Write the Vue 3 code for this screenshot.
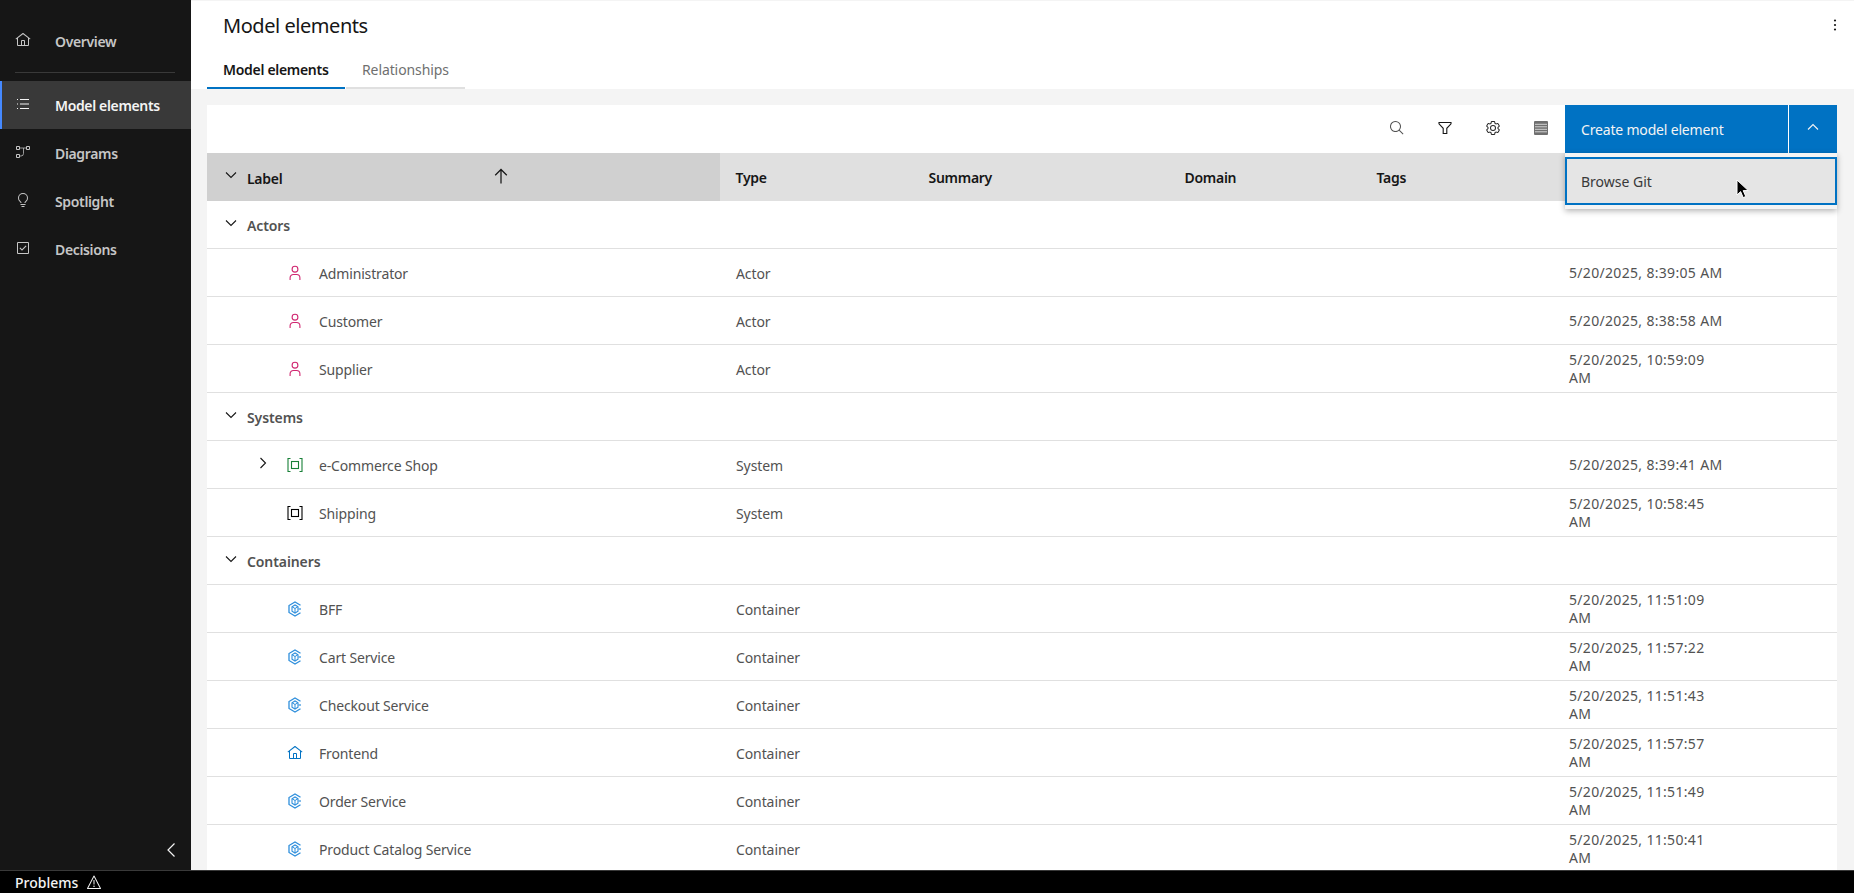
<script setup>
const nav = [
  { label: 'Model elements', icon: 'list', active: true },
  { label: 'Diagrams', icon: 'diagram' },
  { label: 'Spotlight', icon: 'idea' },
  { label: 'Decisions', icon: 'check' }
]
const columns = ['Type', 'Summary', 'Domain', 'Tags', '']
const groups = [
  {
    label: 'Actors',
    rows: [
      { label: 'Administrator', type: 'Actor', date: '5/20/2025, 8:39:05 AM', icon: 'user' },
      { label: 'Customer', type: 'Actor', date: '5/20/2025, 8:38:58 AM', icon: 'user' },
      { label: 'Supplier', type: 'Actor', date: '5/20/2025, 10:59:09\nAM', icon: 'user' }
    ]
  },
  {
    label: 'Systems',
    rows: [
      { label: 'e-Commerce Shop', type: 'System', date: '5/20/2025, 8:39:41 AM', icon: 'system', tone: 'green', expand: true },
      { label: 'Shipping', type: 'System', date: '5/20/2025, 10:58:45\nAM', icon: 'system', tone: 'black' }
    ]
  },
  {
    label: 'Containers',
    rows: [
      { label: 'BFF', type: 'Container', date: '5/20/2025, 11:51:09\nAM', icon: 'container' },
      { label: 'Cart Service', type: 'Container', date: '5/20/2025, 11:57:22\nAM', icon: 'container' },
      { label: 'Checkout Service', type: 'Container', date: '5/20/2025, 11:51:43\nAM', icon: 'container' },
      { label: 'Frontend', type: 'Container', date: '5/20/2025, 11:57:57\nAM', icon: 'home' },
      { label: 'Order Service', type: 'Container', date: '5/20/2025, 11:51:49\nAM', icon: 'container' },
      { label: 'Product Catalog Service', type: 'Container', date: '5/20/2025, 11:50:41\nAM', icon: 'container' }
    ]
  }
]
const homePath = 'M16.6123,2.2138a1.01,1.01,0,0,0-1.2427,0L1,13.4194l1.2427,1.5717L4,13.6209V26a2.0041,2.0041,0,0,0,2,2H26a2.0037,2.0037,0,0,0,2-2V13.63L29.7573,15,31,13.4282ZM18,26H14V18h4Zm2,0V18a2.0023,2.0023,0,0,0-2-2H14a2.002,2.002,0,0,0-2,2v8H6V12.0615l10-7.79,10,7.8005V26Z'
</script>

<template>
  <div class="app">
    <div class="body">
      <aside class="sidebar">
        <a class="nav-item">
          <svg class="nav-icon" viewBox="0 0 32 32" fill="currentColor"><path :d="homePath" /></svg>
          <span>Overview</span>
        </a>
        <div class="nav-divider"></div>
        <a v-for="item in nav" :key="item.label" class="nav-item" :class="{ active: item.active }">
          <svg class="nav-icon" viewBox="0 0 32 32" fill="currentColor">
            <path v-if="item.icon === 'list'" d="M10 6H28V8H10zM10 24H28V26H10zM10 15H28V17H10zM4 15H6V17H4zM4 6H6V8H4zM4 24H6V26H4z" />
            <g v-else-if="item.icon === 'diagram'" fill="none" stroke="currentColor">
              <path stroke-width="2" d="M3 5h6v6H3ZM23 5h6v6h-6ZM3 21h6v6H3Z" />
              <path stroke-width="2" opacity=".75" d="M10 8h12M17 8v11q0 5-5 5h-2" />
            </g>
            <path v-else-if="item.icon === 'idea'" d="M11 24H21V26H11zM13 28H19V30H13zM16 2A10 10 0 0 0 6 12a9.19 9.19 0 0 0 3.46 7.62c1 .93 1.54 1.46 1.54 2.38h2c0-1.84-1.11-2.87-2.19-3.86A7.2 7.2 0 0 1 8 12a8 8 0 0 1 16 0 7.2 7.2 0 0 1-2.82 6.14c-1.07 1-2.18 2-2.18 3.86h2c0-.92.53-1.45 1.54-2.39A9.18 9.18 0 0 0 26 12 10 10 0 0 0 16 2Z" />
            <path v-else d="M26,4H6A2,2,0,0,0,4,6V26a2,2,0,0,0,2,2H26a2,2,0,0,0,2-2V6A2,2,0,0,0,26,4ZM6,26V6H26V26ZM14 21.5L9 16.54 10.59 15 14 18.35 21.41 11 23 12.58 14 21.5z" />
          </svg>
          <span>{{ item.label }}</span>
        </a>
        <button class="collapse">
          <svg width="16" height="16" viewBox="0 0 16 16" fill="none" stroke="currentColor" stroke-width="1.2"><path d="M11.5 1.5 5 8l6.500 6.500" /></svg>
        </button>
      </aside>

      <main class="main">
        <header class="page-header">
          <div class="title-row">
            <h1>Model elements</h1>
            <svg class="overflow" width="16" height="16" viewBox="0 0 16 16" fill="#161616"><circle cx="8" cy="3.500" r="1.100" /><circle cx="8" cy="8" r="1.100" /><circle cx="8" cy="12.500" r="1.100" /></svg>
          </div>
          <div class="tabs">
            <div class="tab selected">Model elements</div>
            <div class="tab">Relationships</div>
          </div>
        </header>

        <section class="content">
          <div class="card">
            <div class="toolbar">
              <button class="tool">
                <svg width="16" height="16" viewBox="0 0 32 32" fill="#525252"><path d="M29,27.5859l-7.5521-7.5521a11.0177,11.0177,0,1,0-1.4141,1.4141L27.5859,29ZM4,13a9,9,0,1,1,9,9A9.01,9.01,0,0,1,4,13Z" /></svg>
              </button>
              <button class="tool">
                <svg width="16" height="16" viewBox="0 0 16 16" fill="none" stroke="#161616" stroke-width="1.100"><path d="M2 2.500h12v1.300L9.800 8.300v5.200H6.200V8.300L2 3.800Z" /></svg>
              </button>
              <button class="tool">
                <svg width="16" height="16" viewBox="0 0 32 32" fill="#262626"><path d="M27,16.76c0-.25,0-.5,0-.76s0-.51,0-.77l1.92-1.68A2,2,0,0,0,29.3,11L26.94,7a2,2,0,0,0-1.73-1,2,2,0,0,0-.64.1l-2.43.82a11.35,11.35,0,0,0-1.31-.75l-.51-2.52a2,2,0,0,0-2-1.61H13.64a2,2,0,0,0-2,1.61l-.51,2.52a11.48,11.48,0,0,0-1.32.75L7.43,6.06A2,2,0,0,0,6.79,6,2,2,0,0,0,5.06,7L2.7,11a2,2,0,0,0,.41,2.51L5,15.24c0,.25,0,.5,0,.76s0,.51,0,.77L3.11,18.45A2,2,0,0,0,2.7,21L5.06,25a2,2,0,0,0,1.73,1,2,2,0,0,0,.64-.1l2.43-.82a11.35,11.35,0,0,0,1.31.75l.51,2.52a2,2,0,0,0,2,1.61h4.72a2,2,0,0,0,2-1.61l.51-2.52a11.48,11.48,0,0,0,1.32-.75l2.42.82a2,2,0,0,0,.64.1,2,2,0,0,0,1.73-1L29.3,21a2,2,0,0,0-.41-2.51ZM25.21,24l-3.43-1.16a8.86,8.86,0,0,1-2.71,1.57L18.36,28H13.64l-.71-3.55a9.36,9.36,0,0,1-2.7-1.57L6.79,24,4.43,20l2.72-2.4a8.9,8.9,0,0,1,0-3.13L4.43,12,6.79,8l3.43,1.16a8.86,8.86,0,0,1,2.71-1.57L13.64,4h4.72l.71,3.55a9.36,9.36,0,0,1,2.7,1.57L25.21,8,27.57,12l-2.72,2.4a8.9,8.9,0,0,1,0,3.13L27.57,20Z" /><path d="M16,22a6,6,0,1,1,6-6A5.94,5.94,0,0,1,16,22Zm0-10a3.91,3.91,0,0,0-4,4,3.91,3.91,0,0,0,4,4,3.91,3.91,0,0,0,4-4A3.91,3.91,0,0,0,16,12Z" /></svg>
              </button>
              <button class="tool">
                <svg width="16" height="16" viewBox="0 0 16 16"><rect x="1" y="1" width="14" height="14" rx="1" fill="#6f6f6f" /><path d="M2 4.300h12M2 6.800h12M2 9.300h12M2 11.800h12" stroke="#e0e0e0" stroke-width=".9" /></svg>
              </button>
              <div class="split">
                <button class="primary">Create model element</button>
                <button class="primary-toggle">
                  <svg width="16" height="16" viewBox="0 0 16 16" fill="none" stroke="#f4f4f4" stroke-width="1.100"><path d="M3 10.500 8 5.500l5 5" /></svg>
                </button>
              </div>
              <div class="menu">
                <div class="menu-item">Browse Git</div>
              </div>
            </div>

            <div class="table-head grid">
              <div class="th label-th">
                <svg class="caret" width="16" height="16" viewBox="0 0 16 16" fill="none" stroke="#161616" stroke-width="1.100"><path d="M3 5.500l5 5 5-5" /></svg>
                <span>Label</span>
                <svg class="sort" width="20" height="20" viewBox="0 0 32 32" fill="#161616"><path d="M16 4L6 14 7.41 15.41 15 7.83 15 28 17 28 17 7.83 24.59 15.41 26 14 16 4z" /></svg>
              </div>
              <div v-for="c in columns" :key="c" class="th">{{ c }}</div>
            </div>

            <template v-for="g in groups" :key="g.label">
              <div class="group-row">
                <svg class="caret" width="16" height="16" viewBox="0 0 16 16" fill="none" stroke="#161616" stroke-width="1.100"><path d="M3 5.500l5 5 5-5" /></svg>
                <span class="group-label">{{ g.label }}</span>
              </div>
              <div v-for="r in g.rows" :key="r.label" class="row grid">
                <div class="name-cell">
                  <span class="expander">
                    <svg v-if="r.expand" width="16" height="16" viewBox="0 0 16 16" fill="none" stroke="#161616" stroke-width="1.100"><path d="M5.500 3l5 5-5 5" /></svg>
                  </span>
                  <svg v-if="r.icon === 'user'" class="el-icon" viewBox="0 0 16 16" fill="none" stroke="#d02670" stroke-width="1.100">
                    <circle cx="8" cy="4.200" r="2.900" />
                    <path d="M3.100 15v-2.200A3.300 3.300 0 0 1 6.400 9.500h3.200a3.300 3.300 0 0 1 3.300 3.300V15" />
                  </svg>
                  <svg v-else-if="r.icon === 'system'" class="el-icon" :class="r.tone" viewBox="0 0 16 16" fill="none" stroke="currentColor" stroke-width="1.100">
                    <path d="M3.500 1.500H1v13h2.500M12.500 1.500H15v13h-2.500" />
                    <rect x="4.500" y="4.500" width="7" height="7" />
                  </svg>
                  <svg v-else-if="r.icon === 'home'" class="el-icon home" viewBox="0 0 32 32" fill="currentColor"><path :d="homePath" /></svg>
                  <svg v-else class="el-icon cont" viewBox="0 0 16 16" fill="none" stroke="#2f8fdc">
                    <path stroke-width="1.300" d="M13.500 4.200 8 1 2 4.500v7L8 15l5.500-3.200" />
                    <path stroke-width="1.100" d="M11 5.700 8 4 5 5.700v4.600L8 12l3-1.700Z" />
                    <path stroke-width="1" d="M5 5.700l3 1.800 3-1.800M8 7.500V12" />
                    <path stroke-width="1.200" d="M11.500 8H14" />
                  </svg>
                  <span class="name-text">{{ r.label }}</span>
                </div>
                <div class="cell">{{ r.type }}</div>
                <div class="cell"></div>
                <div class="cell"></div>
                <div class="cell"></div>
                <div class="cell date">{{ r.date }}</div>
              </div>
            </template>
          </div>
        </section>
      </main>
    </div>

    <footer class="status">
      <span>Problems</span>
      <svg width="16" height="16" viewBox="0 0 32 32" fill="#f4f4f4"><path d="M16,23a1.5,1.5,0,1,0,1.5,1.5A1.5,1.5,0,0,0,16,23ZM15 12H17V21H15zM29,30H3a1,1,0,0,1-.8872-1.4614l13-25a1,1,0,0,1,1.7744,0l13,25A1,1,0,0,1,29,30ZM4.6507,28H27.3493l.002-.0033L16.002,6.1714h-.004L4.6487,27.9967Z" /></svg>
    </footer>

    <svg class="cursor" width="14" height="20" viewBox="0 0 14 20"><path d="M1 1v15l3.600-3.400 2.600 6 2.600-1.100-2.600-5.900h5.100Z" fill="#000" stroke="#fff" stroke-width="1" /></svg>
  </div>
</template>

<style>
html, body { margin: 0; height: 100%; overflow: hidden; }
</style>

<style scoped>
.app {
  height: 893px;
  display: flex;
  flex-direction: column;
  position: relative;
  overflow: hidden;
  font-family: "Noto Sans", "Open Sans", sans-serif;
  font-size: 14px;
  color: #525252;
}
button { border: 0; background: none; padding: 0; font: inherit; display: flex; align-items: center; justify-content: center; letter-spacing: -.18px; }
.body { flex: 1; min-height: 0; display: flex; }

.sidebar {
  width: 191px;
  flex: none;
  background: #161616;
  display: flex;
  flex-direction: column;
  padding-top: 17px;
  box-sizing: border-box;
}
.nav-item {
  height: 48px;
  flex: none;
  display: flex;
  align-items: center;
  padding-left: 15px;
  gap: 24px;
  color: #c6c6c6;
  font-weight: 600;
  letter-spacing: -.35px;
}
.nav-icon { width: 16px; height: 16px; flex: none; margin-top: -3px; }
.nav-item.active {
  background: #393939;
  color: #f4f4f4;
  box-shadow: inset 2px 0 0 #4589ff;
}
.nav-divider { height: 1px; margin: 7px 16px 8px 15px; background: #393939; flex: none; }
.collapse { margin-top: auto; margin-bottom: 12px; align-self: flex-end; margin-right: 12px; color: #f4f4f4; width: 16px; height: 16px; }

.main { flex: 1; min-width: 0; display: flex; flex-direction: column; background: #f4f4f4; }
.page-header { background: #fff; height: 88px; margin-top: 1px; flex: none; display: flex; flex-direction: column; }
.title-row { height: 47px; display: flex; align-items: center; justify-content: space-between; padding: 0 11px 0 32px; flex: none; }
h1 { margin: 2px 0 0; font-size: 20px; font-weight: 400; color: #161616; line-height: 26px; letter-spacing: -.45px; }
.overflow { margin-top: 0; }
.tabs { display: flex; gap: 1px; margin-left: 16px; height: 41px; }
.tab {
  height: 41px;
  box-sizing: border-box;
  padding: 4px 16px 0;
  display: flex;
  align-items: center;
  white-space: nowrap;
  border-bottom: 2px solid #e0e0e0;
  color: #6f6f6f;
  width: 119px;
  letter-spacing: -.1px;
}
.tab.selected { width: 138px; border-bottom-color: #0072c3; color: #161616; font-weight: 600; letter-spacing: -.3px; }

.content { flex: 1; min-height: 0; padding: 16px 17px 0 16px; overflow: hidden; }
.card { background: #fff; height: 100%; overflow: visible; position: relative; }
.toolbar { height: 48px; display: flex; justify-content: flex-end; position: relative; }
.tool { width: 48px; height: 48px; padding-bottom: 2px; box-sizing: border-box; }
.split { display: flex; width: 272px; }
.primary {
  width: 223px;
  height: 48px;
  background: #0072c3;
  color: #f4f4f4;
  justify-content: flex-start;
  padding-left: 16px;
  box-sizing: border-box;
}
.primary-toggle { width: 48px; height: 48px; margin-left: 1px; background: #0072c3; padding-bottom: 4px; box-sizing: border-box; }
.menu {
  position: absolute;
  z-index: 5;
  right: 0;
  top: 48px;
  width: 272px;
  background: #f4f4f4;
  padding: 4px 0;
  box-shadow: 0 2px 6px rgba(0, 0, 0, .3);
}
.menu-item {
  height: 48px;
  box-sizing: border-box;
  border: 2px solid #0072c3;
  background: #e5e5e5;
  color: #393939;
  display: flex;
  align-items: center;
  padding-left: 14px;
}

.grid { display: grid; grid-template-columns: 513px 193px 256px 192px 193px 1fr; }
.table-head { height: 48px; background: #e0e0e0; }
.th { display: flex; align-items: center; padding-left: 15.5px; font-weight: 600; color: #161616; letter-spacing: -.28px; }
.label-th { background: #d0d0d0; position: relative; padding-left: 16px; gap: 8px; }
.label-th span { padding-top: 2px; }
.caret { flex: none; margin-top: -4px; }
.sort { position: absolute; left: 284px; top: 13px; }

.group-row {
  height: 48px;
  box-sizing: border-box;
  border-bottom: 1px solid #e0e0e0;
  padding-left: 16px;
  display: flex;
  align-items: center;
  gap: 8px;
  font-weight: 600;
  letter-spacing: -.1px;
}
.group-label { padding-top: 2px; }
.row { height: 48px; box-sizing: border-box; border-bottom: 1px solid #e0e0e0; }
.cell { display: flex; align-items: center; padding: 2px 0 0 16px; min-width: 0; letter-spacing: -.1px; }
.name-cell { display: flex; align-items: center; min-width: 0; }
.name-text { padding-top: 2px; letter-spacing: -.15px; }
.expander { width: 16px; height: 16px; margin-left: 48px; margin-right: 16px; flex: none; margin-top: -4px; }
.el-icon { width: 16px; height: 16px; flex: none; margin-right: 16px; }
.el-icon.green { color: #198038; }
.el-icon.black { color: #000; }
.el-icon.home { color: #0072c3; }
.date { white-space: pre-line; line-height: 18px; padding: 1px 0 0 15px; letter-spacing: .32px; }

.status {
  height: 23px;
  flex: none;
  box-sizing: border-box;
  background: #000;
  border-top: 1px solid #393939;
  color: #f4f4f4;
  font-weight: 500;
  display: flex;
  align-items: center;
  gap: 8px;
  padding-left: 15px;
}
.cursor { position: absolute; left: 1736px; top: 179px; z-index: 10; }
</style>
